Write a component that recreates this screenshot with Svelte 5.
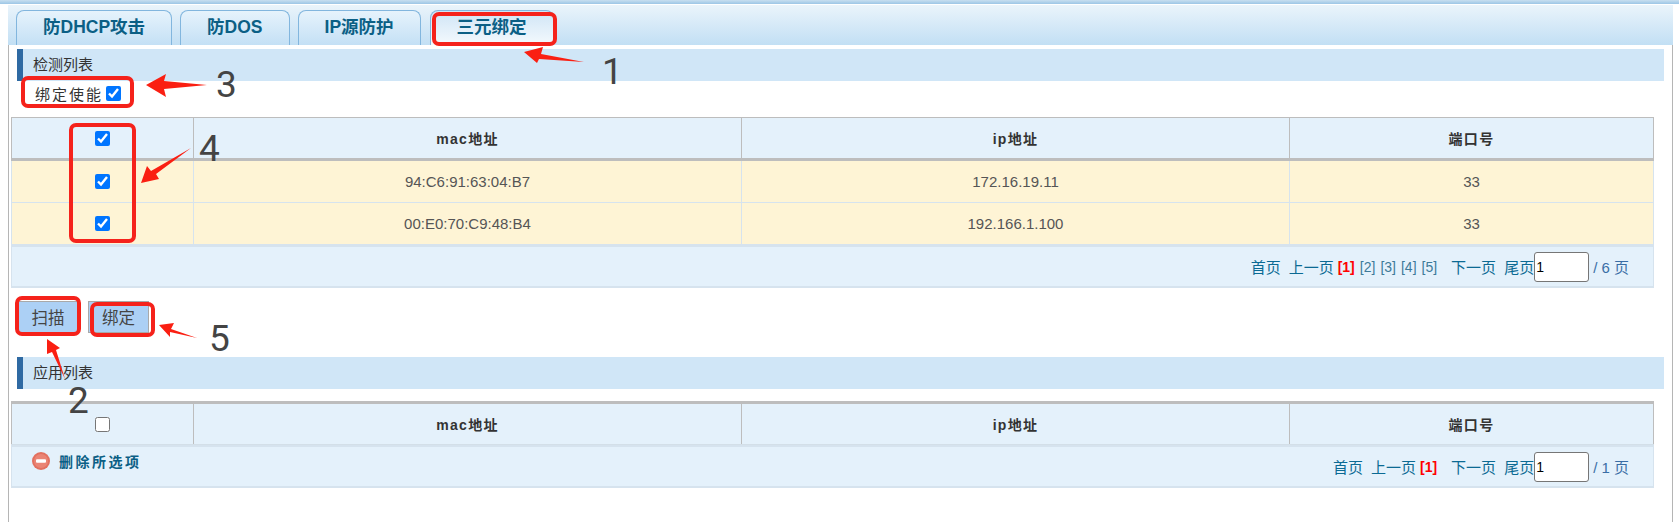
<script>
    const tabs = ["防DHCP攻击", "防DOS", "IP源防护", "三元绑定"];
    const columns = ["mac地址", "ip地址", "端口号"];
    const scanned = [
        { mac: "94:C6:91:63:04:B7", ip: "172.16.19.11", port: 33 },
        { mac: "00:E0:70:C9:48:B4", ip: "192.166.1.100", port: 33 },
    ];
    const marks = [
        { n: 1, x: 602, y: 50 },
        { n: 3, x: 216, y: 63 },
        { n: 4, x: 199, y: 127 },
        { n: 5, x: 209, y: 317 },
        { n: 2, x: 68, y: 379 },
    ];
</script>

<div class="page">
    <div class="topbar"></div>
    <div class="frame">
        <div class="tabs">
            {#each tabs as tab, i}
                <div class="tab" class:active={i === 3}>{tab}</div>
            {/each}
        </div>

        <h2 class="section first">检测列表</h2>
        <label class="enable">绑定使能<input type="checkbox" checked /></label>

        <table>
            <colgroup><col class="c1" /><col class="c2" /><col class="c3" /><col /></colgroup>
            <thead>
                <tr>
                    <th><input type="checkbox" checked /></th>
                    {#each columns as c}<th>{c}</th>{/each}
                </tr>
            </thead>
            <tbody>
                {#each scanned as row}
                    <tr>
                        <td><input type="checkbox" checked /></td>
                        <td>{row.mac}</td>
                        <td>{row.ip}</td>
                        <td>{row.port}</td>
                    </tr>
                {/each}
            </tbody>
        </table>
        <div class="pager">
            <span class="nav">首页</span>
            <span class="nav prev">上一页</span>
            <b>[1]</b>
            <span class="num">[2]</span>
            <span class="num">[3]</span>
            <span class="num">[4]</span>
            <span class="num">[5]</span>
            <span class="nav next">下一页</span>
            <span class="nav last">尾页</span><input class="goto" value="1" />
            <span class="total">/ 6 页</span>
        </div>

        <div class="actions">
            <button class="scan">扫描</button>
            <button class="bind">绑定</button>
        </div>

        <h2 class="section second">应用列表</h2>

        <table>
            <colgroup><col class="c1" /><col class="c2" /><col class="c3" /><col /></colgroup>
            <thead>
                <tr class="applied">
                    <th><input type="checkbox" /></th>
                    {#each columns as c}<th>{c}</th>{/each}
                </tr>
            </thead>
        </table>
        <div class="pager footer">
            <div class="remove">
                <svg width="18" height="18" viewBox="0 0 18 18">
                    <circle cx="9" cy="9" r="9" fill="#e2705f" />
                    <circle cx="9" cy="9" r="7" fill="#ea8474" />
                    <rect x="4" y="7.2" width="10" height="3.6" rx="1" fill="#fff" />
                </svg>
                删除所选项
            </div>
            <span class="nav">首页</span>
            <span class="nav prev">上一页</span>
            <b>[1]</b>
            <span class="nav next">下一页</span>
            <span class="nav last">尾页</span><input class="goto" value="1" />
            <span class="total">/ 1 页</span>
        </div>
    </div>

    <!-- annotations drawn on top of the screenshot -->
    <svg class="notes" width="1679" height="522" viewBox="0 0 1679 522">
        <g class="boxes">
            <rect x="434" y="14" width="121" height="30" rx="5" />
            <rect x="23" y="78" width="109" height="28" rx="5" />
            <rect x="71" y="125" width="63" height="116" rx="5" />
            <rect x="17" y="298" width="62" height="36" rx="5" />
            <rect x="92" y="304" width="61" height="31" rx="5" />
        </g>
        <g class="arrows">
            <polygon points="524,52 543,47 541,54 584,62 539,59 537,63" />
            <polygon points="146,85 166,74 164,81 207,85 164,89 166,97" />
            <polygon points="141,183 147,166 151,171 191,148 156,174 159,179" />
            <polygon points="159,325 174,323 171,329 197,338 170,332 170,337" />
            <polygon points="47,339 60,348 56,350 65,379 52,352 47,354" />
        </g>
    </svg>
    {#each marks as m}
        <span class="mark" style="left:{m.x}px;top:{m.y}px">{m.n}</span>
    {/each}
</div>

<style>
    :global(body) {
        margin: 0;
        background: #fff;
    }

    .page {
        position: relative;
        width: 1679px;
        height: 522px;
        overflow: hidden;
        font-family: "Liberation Sans", "Noto Sans CJK SC", sans-serif;
        font-size: 14px;
        color: #555;
    }

    .topbar {
        height: 4px;
        background: linear-gradient(#c8dff0, #9cc6e6);
    }

    .frame {
        margin: 1px 6px 0 8px;
        height: 517px;
        box-sizing: border-box;
        border-left: 1px solid #b5b5b5;
        border-right: 1px solid #b5b5b5;
        padding: 0 18px 0 2px;
    }

    .tabs {
        display: flex;
        gap: 8px;
        height: 40px;
        box-sizing: border-box;
        margin: 0 -19px 0 -3px;
        padding: 5px 0 0 8px;
        background: linear-gradient(#eaf4fb, #c2dff4);
    }

    .tab {
        box-sizing: border-box;
        height: 35px;
        padding: 0 26px 5px;
        display: flex;
        align-items: center;
        justify-content: center;
        border: 1px solid #82b6de;
        border-bottom: none;
        border-radius: 8px 8px 0 0;
        background: linear-gradient(#e6f3fc, #c4e0f5);
        color: #0b5f85;
        font-size: 17.5px;
        font-weight: bold;
    }

    .tab.active {
        margin-left: 1px;
        background: linear-gradient(#cfe5f6, #f4f9fd);
    }

    .section {
        margin: 0 -10px 0 6px;
        height: 32px;
        box-sizing: border-box;
        border-left: 6px solid #2f6aa3;
        padding-left: 10px;
        background: #d0e6f7;
        color: #333;
        font-size: 15px;
        font-weight: normal;
        line-height: 32px;
    }

    .section.first {
        margin-top: 4px;
    }

    .section.second {
        margin-bottom: 12px;
    }

    .enable {
        display: flex;
        align-items: center;
        gap: 3px;
        height: 36px;
        box-sizing: border-box;
        padding: 0 0 12px 24px;
        letter-spacing: 2px;
        font-size: 15px;
        color: #333;
    }

    input[type="checkbox"] {
        width: 15px;
        height: 15px;
        margin: 0;
    }

    th input[type="checkbox"],
    td input[type="checkbox"] {
        display: block;
        margin: 0 auto;
    }

    table {
        width: 1643px;
        table-layout: fixed;
        border-collapse: collapse;
    }

    .c1 {
        width: 182px;
    }

    .c2 {
        width: 548px;
    }

    .c3 {
        width: 548px;
    }

    th {
        height: 40px;
        padding: 0;
        background: #e4f1fb;
        border: 1px solid #bdbdbd;
        border-bottom: 3px solid #bdbdbd;
        color: #333;
        font-weight: bold;
        font-size: 14px;
        letter-spacing: 1.3px;
    }

    .applied th {
        border-top-width: 3px;
        border-bottom: 1px solid #d3dfe8;
    }

    td {
        height: 41px;
        padding: 0;
        text-align: center;
        font-size: 15px;
        background: #fef4d5;
        border: 1px solid #d6e3ee;
    }

    .pager {
        width: 1643px;
        height: 43px;
        box-sizing: border-box;
        display: flex;
        align-items: center;
        justify-content: flex-end;
        padding-right: 24px;
        background: #e4f1fb;
        border: 1px solid #d6e3ee;
        border-top-width: 2px;
        border-bottom-width: 2px;
        color: #0b6a93;
        font-size: 14px;
    }

    .pager .nav {
        font-size: 15px;
        margin-right: 8px;
    }

    .pager .prev {
        margin-right: 4px;
    }

    .pager b {
        color: #f00;
        margin-right: 5px;
    }

    .pager .num {
        color: #3d7a99;
        margin-right: 5px;
    }

    .pager .next {
        margin-left: 9px;
    }

    .pager .last {
        margin-right: 0;
    }

    .goto {
        box-sizing: border-box;
        width: 55px;
        height: 30px;
        padding: 0 1px;
        border: 1px solid #767676;
        border-radius: 3px;
        background: #fff;
        color: #000;
        font: 14px "Liberation Sans", sans-serif;
    }

    .total {
        margin-left: 4px;
        color: #3a6ea5;
        font-size: 15px;
    }

    .footer {
        justify-content: flex-start;
    }

    .remove {
        display: flex;
        align-items: center;
        gap: 9px;
        margin: -11px auto 0 20px;
        font-weight: bold;
        letter-spacing: 2.5px;
        color: #0b5f85;
    }

    .actions {
        display: flex;
        align-items: center;
        gap: 10px;
        height: 69px;
        box-sizing: border-box;
        padding: 0 0 11px 7px;
    }

    .actions button {
        box-sizing: border-box;
        width: 60px;
        height: 32px;
        padding: 0;
        border: 1px solid #a9a9a9;
        background: #acd0f5;
        color: #444;
        font: 16.5px "Liberation Sans", "Noto Sans CJK SC", sans-serif;
    }

    .actions .bind {
        width: 61px;
    }

    .notes {
        position: absolute;
        left: 0;
        top: 0;
        pointer-events: none;
    }

    .boxes rect {
        fill: none;
        stroke: #f5221b;
        stroke-width: 4;
    }

    .arrows polygon {
        fill: #fa1f12;
    }

    .mark {
        position: absolute;
        font-family: Roboto, sans-serif;
        font-size: 37px;
        line-height: 44px;
        color: #444;
    }
</style>
